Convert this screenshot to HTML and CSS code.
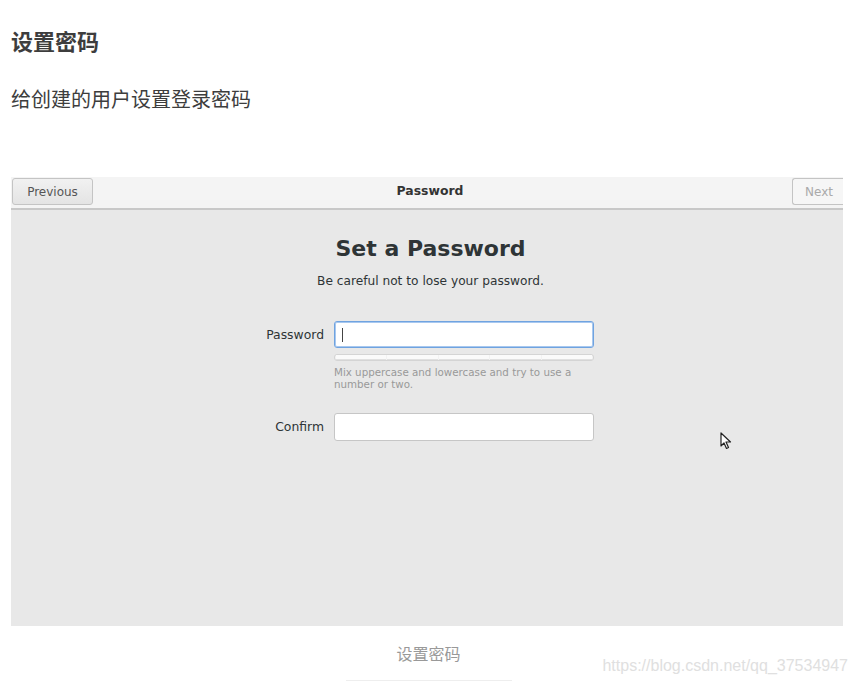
FILE: index.html
```html
<!DOCTYPE html>
<html lang="zh-CN">
<head>
    <meta charset="UTF-8">
    <meta name="viewport" content="width=device-width, initial-scale=1.0">
    <title>设置密码</title>
    <link rel="stylesheet" href="styles.css">
</head>
<body>
    <h3 class="title">设置密码</h3>
    <p class="intro">给创建的用户设置登录密码</p>

    <div class="shot">
        <div class="topbar">
            <button class="nav-btn prev">Previous</button>
            <span class="topbar-title">Password</span>
            <button class="nav-btn next">Next</button>
        </div>
        <div class="panel">
            <h1>Set a Password</h1>
            <p class="sub">Be careful not to lose your password.</p>

            <div class="field">
                <label for="pw">Password</label>
                <div class="field-body">
                    <div class="input focused" id="pw"><span class="caret"></span></div>
                    <div class="strength">
                        <span></span><span></span><span></span><span></span><span></span>
                    </div>
                    <p class="hint">Mix uppercase and lowercase and try to use a number or two.</p>
                </div>
            </div>

            <div class="field">
                <label for="confirm">Confirm</label>
                <div class="field-body">
                    <div class="input tall" id="confirm"></div>
                </div>
            </div>

            <svg class="pointer" width="13" height="18" viewBox="0 0 13 18">
                <path d="M1 1 L1 14 L4 11 L6.5 16.5 L8.5 15.5 L6 10 L10.5 10 Z" fill="#fff" stroke="#222" stroke-width="1.2" stroke-linejoin="round"/>
            </svg>
        </div>
    </div>

    <div class="caption">设置密码</div>
    <div class="watermark">https://blog.csdn.net/qq_37534947</div>
</body>
</html>
```

FILE: styles.css
```css
body {
    margin: 0;
    padding: 0 11px;
    background: #fff;
    font-family: 'Noto Sans CJK SC', sans-serif;
    color: #333;
    position: relative;
    height: 690px;
    overflow: hidden;
}

.title {
    margin: 0;
    padding-top: 25px;
    font-size: 22px;
    font-weight: bold;
    line-height: 30px;
    color: #3d3d3d;
}

.intro {
    margin: 0;
    padding-top: 29px;
    font-size: 20px;
    line-height: 30px;
    color: #3d3d3d;
}

.shot {
    margin-top: 63px;
    width: 832px;
    height: 449px;
    background: #e8e8e8;
    font-family: 'DejaVu Sans', sans-serif;
    display: flex;
    flex-direction: column;
}

.topbar {
    height: 31px;
    background: #f4f4f4;
    border-bottom: 2px solid #c8c8c8;
    display: flex;
    align-items: flex-start;
    justify-content: space-between;
    position: relative;
}

.nav-btn {
    font-family: 'DejaVu Sans', sans-serif;
    font-size: 12px;
    height: 27px;
    margin-top: 1px;
    border: 1px solid #c4c4c4;
    border-radius: 3px;
    background: linear-gradient(#f1f1f1, #e4e4e4);
    color: #555;
}

.prev {
    width: 81px;
    margin-left: 1px;
}

.next {
    width: 51px;
    padding-left: 8px;
    color: #aaa;
    background: #f6f6f6;
    border-right: none;
    border-radius: 3px 0 0 3px;
}

.topbar-title {
    position: absolute;
    left: 6px;
    right: 0;
    top: 6px;
    text-align: center;
    font-size: 12.4px;
    font-weight: bold;
    color: #333;
    pointer-events: none;
}

.panel {
    flex: 1;
    position: relative;
    display: flex;
    flex-direction: column;
    align-items: center;
    padding-top: 24px;
    padding-left: 7px;
}

.panel h1 {
    margin: 0;
    font-size: 22px;
    line-height: 30px;
    color: #2e3436;
}

.sub {
    margin: 9px 0 0;
    font-size: 12.2px;
    line-height: 16px;
    color: #2e3436;
}

.field {
    display: flex;
    align-items: flex-start;
    margin-top: 32px;
    margin-left: -13px;
}

.field + .field {
    margin-top: 23px;
}

.field label {
    width: 70px;
    text-align: right;
    margin-right: 10px;
    font-size: 12.4px;
    line-height: 27px;
    color: #2e3436;
}

.field-body {
    width: 260px;
}

.input {
    height: 25px;
    border: 1px solid #c6c6c6;
    border-radius: 3px;
    background: #fff;
    position: relative;
}

.input.tall {
    height: 26px;
}

.input.focused {
    border-color: #6fa3e0;
    box-shadow: inset 0 0 0 1px #a8c8ef;
}

.caret {
    position: absolute;
    left: 7px;
    top: 6px;
    width: 1px;
    height: 14px;
    background: #444;
}

.strength {
    margin-top: 6px;
    height: 5px;
    border: 1px solid #d4d4d4;
    border-radius: 3px;
    background: #f2f2f2;
    display: flex;
    gap: 1px;
    padding: 0 1px;
}

.strength span {
    flex: 1;
    background: #fafafa;
    border-bottom: 1px solid #e0e0e0;
}

.hint {
    margin: 5px 0 0;
    font-size: 10.3px;
    line-height: 12px;
    color: #999;
    width: 240px;
}

.pointer {
    position: absolute;
    left: 709px;
    top: 222px;
}

.caption {
    text-align: center;
    margin-top: 16px;
    font-size: 16px;
    color: #999;
    line-height: 22px;
}

.caption::after {
    content: "";
    display: block;
    width: 166px;
    margin: 16px auto 0;
    border-bottom: 1px solid #eee;
}

.watermark {
    position: absolute;
    right: 9px;
    top: 657px;
    font-family: 'Liberation Sans', sans-serif;
    font-size: 16px;
    color: #e0e0e0;
}
```
